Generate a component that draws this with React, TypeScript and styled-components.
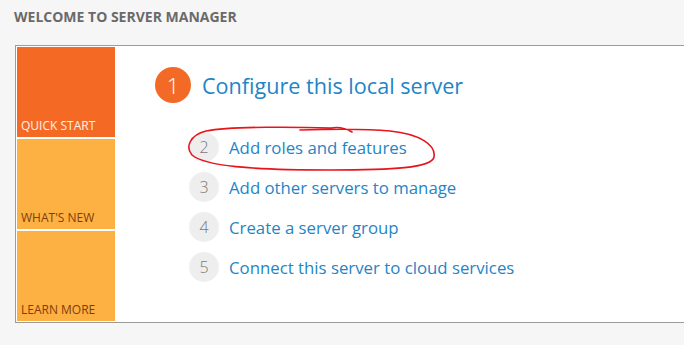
import React from "react";
import styled, {createGlobalStyle} from "styled-components";

const GlobalStyle = createGlobalStyle`
  html, body {
    margin: 0;
    padding: 0;
    background: #f6f6f6;
    overflow: hidden;
  }
  body {
    font-family: "Open Sans", "Noto Sans", sans-serif;
  }
`;

interface ITile {
    label: string
    primary?: boolean
}

const tiles: ITile[] = [
    {label: "QUICK START", primary: true},
    {label: "WHAT'S NEW"},
    {label: "LEARN MORE"}
];

const steps = [
    {num: 2, text: "Add roles and features"},
    {num: 3, text: "Add other servers to manage"},
    {num: 4, text: "Create a server group"},
    {num: 5, text: "Connect this server to cloud services"}
];

const App = () => (
    <Page>
        <GlobalStyle/>
        <Title>WELCOME TO SERVER MANAGER</Title>
        <Panel>
            <TileColumn>
                {tiles.map(({label, primary}) => (
                    <Tile key={label} primary={primary}>{label}</Tile>
                ))}
            </TileColumn>
            <Content>
                <Heading>
                    <BigNumber>1</BigNumber>
                    <HeadingText>Configure this local server</HeadingText>
                </Heading>
                <StepList>
                    {steps.map(({num, text}) => (
                        <Step key={num}>
                            <StepNumber>{num}</StepNumber>
                            <StepLink>{text}</StepLink>
                        </Step>
                    ))}
                </StepList>
                <Scribble width="300" height="60" viewBox="180 120 300 60">
                    <path
                        d="M352 132 Q342 126 331 128 C300 127 232 126 206 131 C190 135 185 147 192 155 C205 166 250 170 330 170 C392 170 432 168 434 157 C436 145 420 134 390 131 C360 128 330 129 300 130"
                        fill="none"
                        stroke="#e8131b"
                        strokeWidth="1.6"
                        strokeLinecap="round"
                    />
                </Scribble>
            </Content>
        </Panel>
    </Page>
);

const Page = styled.div`
  width: 684px;
  height: 345px;
  overflow: hidden;
`;

const Title = styled.h1`
  margin: 0;
  padding: 7px 0 0 14px;
  height: 45px;
  box-sizing: border-box;
  font-size: 14px;
  font-weight: 700;
  color: #6a6a6a;
`;

const Panel = styled.div`
  position: relative;
  margin-left: 15px;
  width: 720px;
  height: 278px;
  box-sizing: border-box;
  border: 1px solid #9c9c9c;
  background: #fff;
  display: flex;
`;

const TileColumn = styled.div`
  display: flex;
  flex-direction: column;
  gap: 2px;
  padding: 1px 0 0 1px;
`;

const Tile = styled.div<{ primary?: boolean }>`
  width: 98px;
  height: 90px;
  box-sizing: border-box;
  display: flex;
  align-items: flex-end;
  padding: 0 0 3px 4px;
  font-size: 12px;
  background: ${p => p.primary ? "#f46a25" : "#feb143"};
  color: ${p => p.primary ? "#fdf1e8" : "#7f3d0c"};
`;

const Content = styled.div`
  padding: 21px 0 0 40px;
`;

const Heading = styled.div`
  display: flex;
  align-items: center;
  gap: 11px;
`;

const BigNumber = styled.div`
  width: 36px;
  height: 36px;
  border-radius: 50%;
  background: #f26a26;
  color: #fff;
  display: flex;
  align-items: center;
  justify-content: center;
  font-size: 22px;
  font-weight: 300;
`;

const HeadingText = styled.div`
  font-size: 21.6px;
  color: #1e85c6;
  font-weight: 400;
`;

const StepList = styled.div`
  margin: 24px 0 0 34px;
  display: flex;
  flex-direction: column;
`;

const Step = styled.div`
  height: 40px;
  display: flex;
  align-items: center;
  gap: 10px;
`;

const StepNumber = styled.div`
  width: 30px;
  height: 30px;
  border-radius: 50%;
  background: #eeeeee;
  color: #7a7a7a;
  display: flex;
  align-items: center;
  justify-content: center;
  font-size: 16px;
  font-weight: 300;
`;

const StepLink = styled.span`
  font-size: 16.8px;
  color: #1e85c6;
  cursor: pointer;
`;

const Scribble = styled.svg`
  position: absolute;
  left: 164px;
  top: 74px;
  pointer-events: none;
`;

export default App;
